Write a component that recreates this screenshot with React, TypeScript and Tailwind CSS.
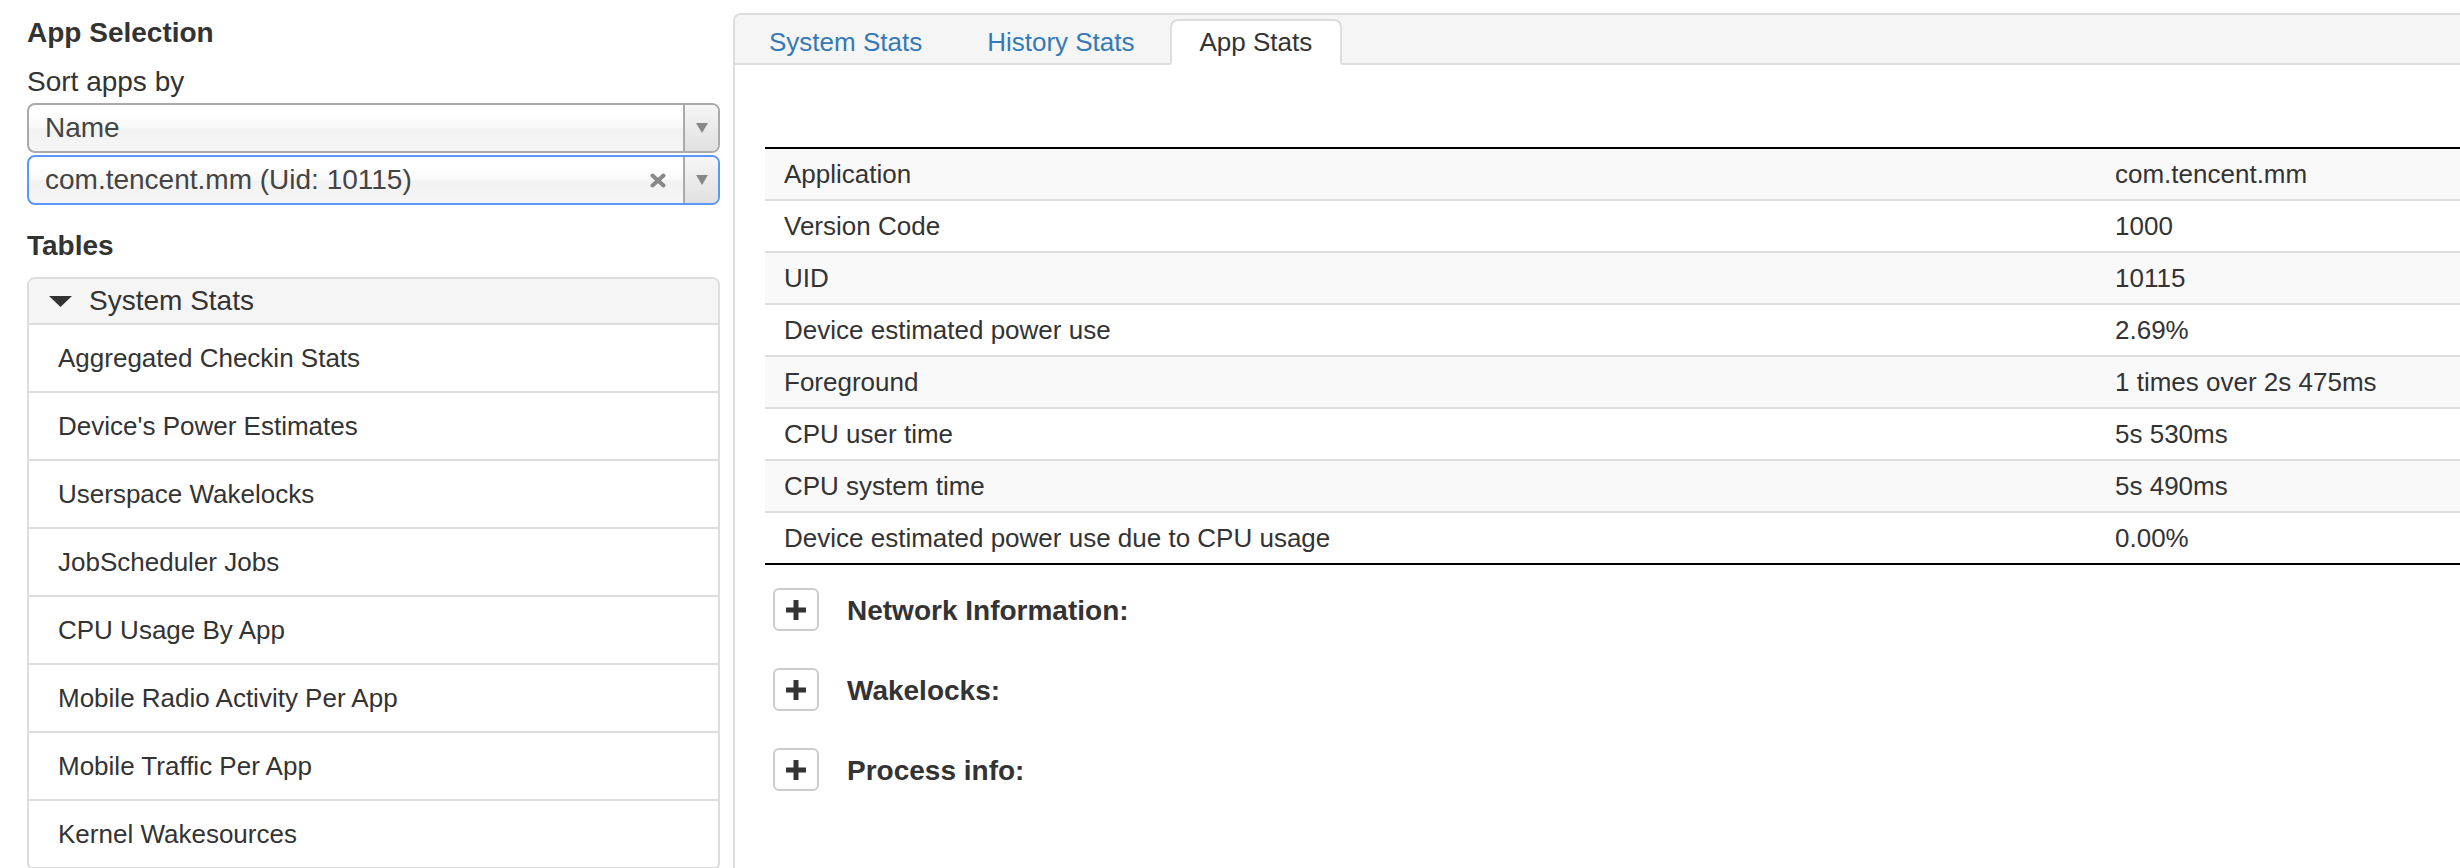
import { useState } from "react";

const statRows: [string, string][] = [
  ["Application", "com.tencent.mm"],
  ["Version Code", "1000"],
  ["UID", "10115"],
  ["Device estimated power use", "2.69%"],
  ["Foreground", "1 times over 2s 475ms"],
  ["CPU user time", "5s 530ms"],
  ["CPU system time", "5s 490ms"],
  ["Device estimated power use due to CPU usage", "0.00%"],
];

const tableLinks = [
  "Aggregated Checkin Stats",
  "Device's Power Estimates",
  "Userspace Wakelocks",
  "JobScheduler Jobs",
  "CPU Usage By App",
  "Mobile Radio Activity Per App",
  "Mobile Traffic Per App",
  "Kernel Wakesources",
];

const sections = ["Network Information:", "Wakelocks:", "Process info:"];

const tabs = ["System Stats", "History Stats", "App Stats"];

function Caret() {
  return (
    <svg width="12" height="10" viewBox="0 0 12 10">
      <path d="M0 0h12L6 10z" fill="#888" />
    </svg>
  );
}

function ChosenSelect({ value, focused, clearable }: { value: string; focused?: boolean; clearable?: boolean }) {
  return (
    <div
      className={
        "flex h-[50px] items-stretch rounded-[8px] border-2 bg-[linear-gradient(#fff_20%,#f8f8f8_50%,#f2f2f2_52%,#f6f6f6_100%)] text-[28px] text-[#444] " +
        (focused ? "border-[#5897fb]" : "border-[#aaa]")
      }
    >
      <span className="flex flex-1 items-center pl-[16px] leading-none">{value}</span>
      {clearable && (
        <span className="mr-[17px] flex w-[30px] items-center justify-end">
          <svg width="16" height="15" viewBox="0 0 16 15">
            <path d="M2.5 2.5l11 10M13.5 2.5l-11 10" stroke="#888" strokeWidth="4" strokeLinecap="round" />
          </svg>
        </span>
      )}
      <span className="flex w-[35px] items-center justify-center rounded-r-[6px] border-l-2 border-[#aaa] bg-[linear-gradient(#f6f6f6,#e0e0e0)]">
        <Caret />
      </span>
    </div>
  );
}

export default function App() {
  const [active, setActive] = useState("App Stats");

  return (
    <div className="flex h-[868px] w-[2460px] overflow-hidden bg-white font-['Liberation_Sans',Arial,sans-serif] text-[#333]">

      {/* Left: app selection */}
      <aside className="w-[733px] shrink-0 pl-[27px] pr-[13px]">
        <h2 className="mt-[13px] text-[28px] font-bold leading-[40px]">App Selection</h2>
        <div className="mt-[9px] text-[28px] leading-[40px]">Sort apps by</div>
        <div className="mt-px">
          <ChosenSelect value="Name" />
        </div>
        <div className="mt-[2px]">
          <ChosenSelect value="com.tencent.mm (Uid: 10115)" focused clearable />
        </div>

        <h2 className="mt-[21px] text-[28px] font-bold leading-[40px]">Tables</h2>

        <div className="mt-[11px] rounded-[8px] border-2 border-[#ddd]">
          <div className="flex h-[46px] items-center gap-[17px] rounded-t-[6px] border-b-2 border-[#ddd] bg-[#f5f5f5] pl-[20px] text-[28px]">
            <svg width="23" height="11" viewBox="0 0 23 11">
              <path d="M0 0h23L11.5 11z" fill="#333" />
            </svg>
            System Stats
          </div>
          {tableLinks.map((name) => (
            <div key={name} className="flex h-[68px] items-center border-b-2 border-[#ddd] pl-[29px] text-[26px]">
              {name}
            </div>
          ))}
        </div>
      </aside>

      {/* Right: tabbed stats panel */}
      <main className="mt-[13px] w-[1760px] shrink-0 rounded-tl-[8px] border-l-2 border-t-2 border-[#ddd]">
        <nav className="flex h-[50px] items-end gap-[5px] rounded-tl-[6px] border-b-2 border-[#ddd] bg-[#f5f5f5] pl-[4px]">
          {tabs.map((t) => (
            <button
              key={t}
              onClick={() => setActive(t)}
              className={
                "-mb-[2px] flex h-[46px] items-center rounded-t-[8px] border-2 px-[28px] text-[26px] " +
                (t === active
                  ? "border-[#ddd] border-b-white bg-white text-[#333]"
                  : "border-transparent text-[#337ab7]")
              }
            >
              {t}
            </button>
          ))}
        </nav>

        <div className="px-[30px]">
          <div className="mt-[82px] border-y-2 border-black">
            {statRows.map(([label, value], i) => (
              <div
                key={label}
                className={
                  "flex items-center pl-[19px] text-[26px] " +
                  (i % 2 === 0 ? "bg-[#f9f9f9] " : "bg-white ") +
                  (i < statRows.length - 1 ? "h-[52px] border-b-2 border-[#ddd]" : "h-[50px]")
                }
              >
                <span className="w-[1331px] shrink-0">{label}</span>
                <span>{value}</span>
              </div>
            ))}
          </div>

          <div className="mt-[23px] flex flex-col gap-[37px] pl-[8px]">
            {sections.map((s) => (
              <div key={s} className="flex items-start gap-[28px]">
                <span className="flex h-[43px] w-[46px] items-center justify-center rounded-[6px] border-2 border-[#ccc] bg-white">
                  <svg width="22" height="22" viewBox="0 0 22 22">
                    <path d="M11 1v20M1 11h20" stroke="#333" strokeWidth="5" />
                  </svg>
                </span>
                <h3 className="mt-[7px] text-[28px] font-bold leading-[32px]">{s}</h3>
              </div>
            ))}
          </div>
        </div>
      </main>
    </div>
  );
}
